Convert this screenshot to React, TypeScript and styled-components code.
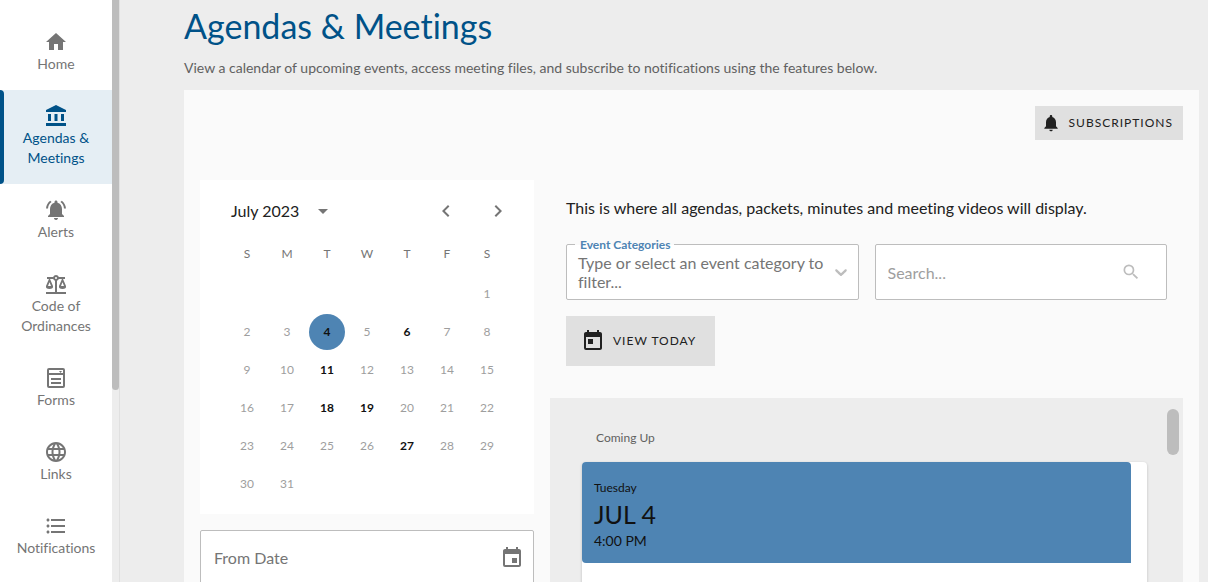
import React from "react";
import styled, { createGlobalStyle, css } from "styled-components";
import {
  MdAccountBalance,
  MdArrowDropDown,
  MdChevronLeft,
  MdChevronRight,
  MdEvent,
  MdFormatListBulleted,
  MdHome,
  MdLanguage,
  MdNotifications,
  MdNotificationsActive,
  MdSearch,
  MdToday,
} from "react-icons/md";

const color = {
  brand: "#005288",
  accent: "#4e84b3",
  text: "#212121",
  muted: "#757575",
  faint: "#9e9e9e",
  line: "#bdbdbd",
  page: "#ededed",
  panel: "#fafafa",
  button: "#e0e0e0",
};

const GlobalStyle = createGlobalStyle`
  * { box-sizing: border-box; }
  body {
    margin: 0;
    overflow: hidden;
    background: ${color.page};
    color: ${color.text};
    font-family: Lato, "Liberation Sans", sans-serif;
    font-size: 14px;
    font-variant-ligatures: no-common-ligatures;
    line-height: 20px;
  }
  button, input, select { font: inherit; color: inherit; }
  button { border: 0; padding: 0; background: none; cursor: pointer; }
  svg { display: block; flex: none; fill: currentColor; }
`;

const Shell = styled.div`
  display: flex;
  height: 100vh;
`;

const Sidebar = styled.aside`
  display: flex;
  flex: none;
  width: 120px;
  background: #fff;
  border-right: 1px solid ${color.button};
`;

const Nav = styled.nav`
  flex: 1;
  padding-top: 16px;
  overflow: hidden;
`;

const NavLink = styled.a<{ $active?: boolean }>`
  display: flex;
  flex-direction: column;
  align-items: center;
  padding: 14px 12px 16px;
  color: ${color.muted};
  text-align: center;
  text-decoration: none;
  ${(p) =>
    p.$active &&
    css`
      position: relative;
      color: ${color.brand};
      background: #e5eef4;
      &::before {
        content: "";
        position: absolute;
        inset: 0 auto 0 0;
        width: 4px;
        border-radius: 0 4px 4px 0;
        background: ${color.brand};
      }
    `}
`;

const NavTrack = styled.div`
  width: 7px;
  background: ${color.page};
`;

const NavThumb = styled.div`
  height: 67%;
  border-radius: 0 0 4px 4px;
  background: ${color.line};
`;

const Main = styled.main`
  flex: 1;
  min-width: 0;
  padding: 4px 9px 0 64px;
  overflow: hidden;
`;

const Title = styled.h1`
  margin: 0;
  color: ${color.brand};
  font-size: 34px;
  font-weight: 400;
  line-height: 44px;
`;

const Intro = styled.p`
  margin: 10px 0 12px;
  color: #616161;
`;

const Panel = styled.section`
  padding: 16px;
  background: ${color.panel};
`;

const Toolbar = styled.div`
  display: flex;
  justify-content: flex-end;
  margin-bottom: 40px;
`;

const ActionButton = styled.button<{ $large?: boolean }>`
  display: inline-flex;
  align-items: center;
  gap: 8px;
  height: ${(p) => (p.$large ? 50 : 34)}px;
  padding: ${(p) => (p.$large ? "0 19px 0 15px" : "0 10px 0 6px")};
  background: ${color.button};
  font-size: 12px;
  letter-spacing: 1px;
  text-transform: uppercase;
`;

const Columns = styled.div`
  display: flex;
  align-items: flex-start;
  gap: 16px;
`;

const DateColumn = styled.div`
  display: flex;
  flex: none;
  flex-direction: column;
  gap: 16px;
  width: 334px;
`;

const Calendar = styled.div`
  padding: 12px 27px 11px;
  background: #fff;
`;

const CalendarHead = styled.div`
  display: flex;
  align-items: center;
  height: 38px;
  margin-bottom: 2px;
  padding-left: 4px;
  color: ${color.muted};
`;

const MonthButton = styled.button`
  display: flex;
  align-items: center;
  gap: 12px;
  margin-right: auto;
  font-size: 16px;
  span { color: ${color.text}; }
`;

const StepButton = styled.button`
  padding: 7px 14px;
  & + & { margin-right: -17px; }
`;

const Days = styled.table`
  width: 280px;
  table-layout: fixed;
  border-collapse: collapse;
  font-size: 12px;
  text-align: center;
  th {
    height: 43px;
    padding: 0;
    color: ${color.muted};
    font-weight: 400;
  }
  td { height: 38px; padding: 1px 2px; }
`;

const Day = styled.button<{ $event: boolean; $selected: boolean }>`
  display: block;
  width: 36px;
  height: 36px;
  border-radius: 50%;
  color: ${(p) => (p.$event ? "#111" : color.faint)};
  font-weight: ${(p) => (p.$event ? 700 : 400)};
  background: ${(p) => (p.$selected ? color.accent : "none")};
`;

const Box = styled.div`
  position: relative;
  display: flex;
  align-items: center;
  min-width: 0;
  height: 56px;
  border: 1px solid ${color.line};
  border-radius: 2px;
  background: #fff;
  color: ${color.line};
`;

const DateBox = styled(Box)`
  padding: 0 9px 0 13px;
  color: ${color.muted};
`;

const SelectBox = styled(Box)`
  padding: 0 7px 0 11px;
`;

const SearchBox = styled(Box)`
  padding: 0 25px 0 12px;
`;

const TextInput = styled.input`
  flex: 1;
  min-width: 0;
  border: 0;
  padding: 0;
  outline: 0;
  background: none;
  font-size: 16px;
  &::placeholder { color: inherit; opacity: 1; }
`;

const SearchInput = styled(TextInput)`
  padding-top: 2px;
  color: ${color.faint};
`;

const FloatingLabel = styled.label`
  position: absolute;
  top: -9px;
  left: 8px;
  padding: 0 4px 0 5px;
  background: linear-gradient(${color.panel} 50%, #fff 50%);
  color: ${color.accent};
  font-size: 12px;
  font-weight: 700;
  line-height: 18px;
`;

const SelectValue = styled.span`
  flex: 1;
  color: ${color.muted};
  font-size: 16px;
  line-height: 19px;
`;

const NativeSelect = styled.select`
  position: absolute;
  inset: 0;
  width: 100%;
  opacity: 0;
`;

const EventColumn = styled.div`
  flex: 1;
  min-width: 0;
`;

const Filters = styled.div`
  padding: 16px 16px 32px;
`;

const Lead = styled.p`
  margin: 0 0 24px;
  font-size: 16px;
  line-height: 24px;
`;

const Fields = styled.div`
  display: grid;
  grid-template-columns: 1fr 1fr;
  gap: 16px;
  margin-bottom: 16px;
`;

const Feed = styled.section`
  display: flex;
  background: ${color.page};
`;

const FeedBody = styled.div`
  flex: 1;
  padding: 30px 20px 0 32px;
`;

const FeedHeading = styled.h2`
  margin: 0 0 14px;
  padding-left: 14px;
  color: #616161;
  font-size: 12px;
  font-weight: 400;
`;

const FeedThumb = styled.div`
  width: 12px;
  height: 46px;
  margin: 11px 4px 0 0;
  border-radius: 6px;
  background: ${color.line};
`;

const Card = styled.article`
  min-height: 240px;
  padding-right: 16px;
  border-radius: 4px;
  background: #fff;
  box-shadow: 0 1px 3px rgba(0, 0, 0, 0.2);
`;

const CardDate = styled.header`
  display: flex;
  flex-direction: column;
  padding: 16px 12px 12px;
  border-radius: 4px 4px 0 4px;
  background: ${color.accent};
  color: #111;
`;

const Weekday = styled.span`
  font-size: 12px;
`;

const EventDate = styled.strong`
  font-size: 25px;
  font-weight: 400;
  line-height: 33px;
`;

const ScaleIcon = () => (
  <svg width="24" height="24" viewBox="0 0 24 24" aria-hidden="true">
    <path d="M12 3c-1.27 0-2.4.8-2.82 2H3v2h1.95L2 14c-.47 2 1 3 3.500 3s4.060-1 3.500-3L6.050 7h3.120c.33.85.98 1.500 1.830 1.830V20H2v2h20v-2h-9V8.820c.85-.32 1.500-.97 1.820-1.820h3.130L15 14c-.47 2 1 3 3.500 3s4.060-1 3.500-3l-2.950-7H21V5h-6.170C14.400 3.800 13.270 3 12 3m0 2a1 1 0 1 1 0 2 1 1 0 0 1 0-2M5.500 10.250 7 14H4l1.500-3.750m13 0L20 14h-3l1.500-3.750Z" />
  </svg>
);

const FormIcon = () => (
  <svg width="24" height="24" viewBox="0 0 24 24" aria-hidden="true">
    <path
      fillRule="evenodd"
      d="M5 2h14a2 2 0 0 1 2 2v16a2 2 0 0 1-2 2H5a2 2 0 0 1-2-2V4a2 2 0 0 1 2-2Zm0 2v3h14V4H5Zm0 5v11h14V9H5Z"
    />
    <path d="M15 5h3l-1.500 2L15 5ZM7 12h10v2H7zM7 16h10v2H7z" />
  </svg>
);

const CaretIcon = () => (
  <svg width="20" height="20" viewBox="0 0 20 20" aria-hidden="true">
    <path d="M4.516 7.548c.436-.446 1.043-.481 1.576 0L10 11.295l3.908-3.747c.533-.481 1.141-.446 1.574 0 .436.445.408 1.197 0 1.615-.406.418-4.695 4.502-4.695 4.502-.217.223-.502.335-.787.335s-.57-.112-.789-.335c0 0-4.287-4.084-4.695-4.502s-.436-1.17 0-1.615z" />
  </svg>
);

const navItems = [
  { label: "Home", icon: <MdHome size={24} /> },
  { label: "Agendas & Meetings", icon: <MdAccountBalance size={24} />, active: true },
  { label: "Alerts", icon: <MdNotificationsActive size={24} /> },
  { label: "Code of Ordinances", icon: <ScaleIcon /> },
  { label: "Forms", icon: <FormIcon /> },
  { label: "Links", icon: <MdLanguage size={24} /> },
  { label: "Notifications", icon: <MdFormatListBulleted size={24} /> },
];

const weekdays = ["S", "M", "T", "W", "T", "F", "S"];
const eventDays = [4, 6, 11, 18, 19, 27];
const firstWeekday = 6;
const weeks = Array.from({ length: 6 }, (_, w) =>
  Array.from({ length: 7 }, (_, d) => {
    const n = w * 7 + d - firstWeekday + 1;
    return n >= 1 && n <= 31 ? n : null;
  })
);

export default function App() {
  return (
    <Shell>
      <GlobalStyle />
      <Sidebar>
        <Nav aria-label="Main">
          {navItems.map((item) => (
            <NavLink key={item.label} href="#" $active={item.active}>
              {item.icon}
              <span>{item.label}</span>
            </NavLink>
          ))}
        </Nav>
        <NavTrack>
          <NavThumb />
        </NavTrack>
      </Sidebar>
      <Main>
        <Title>Agendas &amp; Meetings</Title>
        <Intro>
          View a calendar of upcoming events, access meeting files, and subscribe to
          notifications using the features below.
        </Intro>
        <Panel>
          <Toolbar>
            <ActionButton type="button">
              <MdNotifications size={20} />
              Subscriptions
            </ActionButton>
          </Toolbar>
          <Columns>
            <DateColumn>
              <Calendar>
                <CalendarHead>
                  <MonthButton type="button">
                    <span>July 2023</span>
                    <MdArrowDropDown size={24} />
                  </MonthButton>
                  <StepButton type="button" aria-label="Previous month">
                    <MdChevronLeft size={24} />
                  </StepButton>
                  <StepButton type="button" aria-label="Next month">
                    <MdChevronRight size={24} />
                  </StepButton>
                </CalendarHead>
                <Days>
                  <thead>
                    <tr>
                      {weekdays.map((d, i) => (
                        <th key={i} scope="col">{d}</th>
                      ))}
                    </tr>
                  </thead>
                  <tbody>
                    {weeks.map((week, w) => (
                      <tr key={w}>
                        {week.map((n, d) => (
                          <td key={d}>
                            {n && (
                              <Day
                                type="button"
                                $event={eventDays.includes(n)}
                                $selected={n === 4}
                              >
                                {n}
                              </Day>
                            )}
                          </td>
                        ))}
                      </tr>
                    ))}
                  </tbody>
                </Days>
              </Calendar>
              <DateBox>
                <TextInput aria-label="From Date" placeholder="From Date" />
                <MdEvent size={24} />
              </DateBox>
            </DateColumn>
            <EventColumn>
              <Filters>
                <Lead>
                  This is where all agendas, packets, minutes and meeting videos will display.
                </Lead>
                <Fields>
                  <SelectBox>
                    <FloatingLabel htmlFor="category">Event Categories</FloatingLabel>
                    <SelectValue>Type or select an event category to filter...</SelectValue>
                    <CaretIcon />
                    <NativeSelect id="category" />
                  </SelectBox>
                  <SearchBox>
                    <SearchInput type="search" aria-label="Search" placeholder="Search..." />
                    <MdSearch size={20} />
                  </SearchBox>
                </Fields>
                <ActionButton type="button" $large>
                  <MdToday size={24} />
                  View Today
                </ActionButton>
              </Filters>
              <Feed>
                <FeedBody>
                  <FeedHeading>Coming Up</FeedHeading>
                  <Card>
                    <CardDate>
                      <Weekday>Tuesday</Weekday>
                      <EventDate>JUL 4</EventDate>
                      <time>4:00 PM</time>
                    </CardDate>
                  </Card>
                </FeedBody>
                <FeedThumb />
              </Feed>
            </EventColumn>
          </Columns>
        </Panel>
      </Main>
    </Shell>
  );
}
